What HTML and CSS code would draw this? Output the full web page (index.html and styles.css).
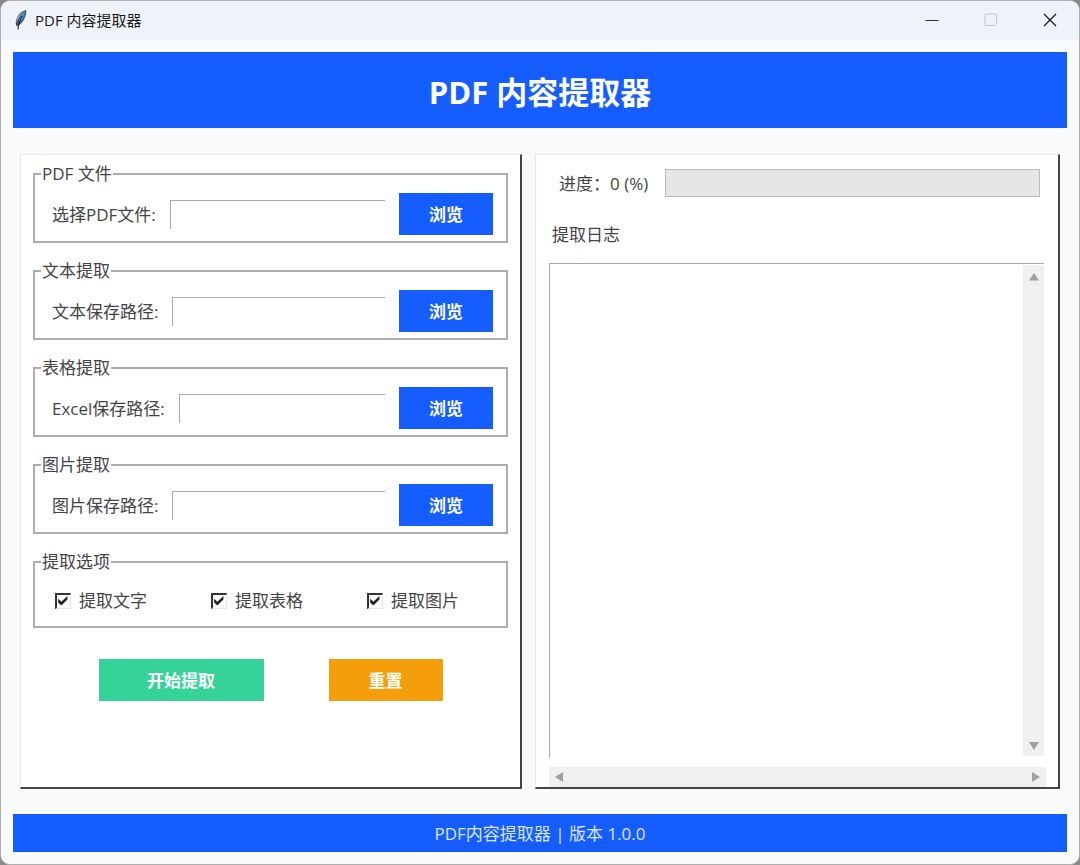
FILE: index.html
```
<!DOCTYPE html>
<html lang="zh-CN">
  <head>
    <meta charset="UTF-8" />
    <meta name="viewport" content="width=device-width, initial-scale=1.0" />
    <title>PDF 内容提取器</title>
    <link rel="stylesheet" href="styles.css">
  </head>
  <body>
    <div class="window">
      <header class="titlebar">
        <svg class="feather" width="14" height="22" viewBox="0 0 14 22">
          <path d="M12 1C8 2 4 5 2.500 10c-1 3-1 5 0 7l1 .5C7 15 10 12 11.500 7c.7-2 .9-4 .5-6z" fill="#3d5573" />
          <path d="M11 2C8 5 6 8 4.500 13.500L7.500 11.500c2-2.500 3.500-5.500 3.500-9.500z" fill="#4a90d9" />
          <path d="M10 2.500C6.500 4.500 4 7 2.800 10.500L2.500 14C4 9.500 6.500 5.500 10 2.500z" fill="#a9b7c6" />
          <path d="M8.500 7C6 10 4.500 15 4 20.500" fill="none" stroke="#1c1c1c" />
        </svg>
        <span class="titlebar-text">PDF 内容提取器</span>
        <div class="window-buttons">
          <button type="button" aria-label="最小化">
            <svg width="14" height="14" viewBox="0 0 14 14"><path d="M0.500 7.500h13" stroke="#333" /></svg>
          </button>
          <button type="button" aria-label="最大化" disabled>
            <svg width="14" height="14" viewBox="0 0 14 14"><rect x="1" y="1" width="11.500" height="11.500" rx="1" fill="none" stroke="#c4c8cc" /></svg>
          </button>
          <button type="button" aria-label="关闭">
            <svg width="14" height="14" viewBox="0 0 14 14"><path d="M1 1l12 12M13 1L1 13" stroke="#1a1a1a" stroke-width="1.300" /></svg>
          </button>
        </div>
      </header>

      <h1>PDF 内容提取器</h1>

      <main>
        <form class="panel form-panel" id="extractForm">
          <fieldset>
            <legend>PDF 文件</legend>
            <div class="row">
              <label for="pdf_file">选择PDF文件:</label>
              <input type="text" id="pdf_file" name="pdf_file" />
              <button type="button" class="btn">浏览</button>
            </div>
          </fieldset>

          <fieldset>
            <legend>文本提取</legend>
            <div class="row">
              <label for="text_path">文本保存路径:</label>
              <input type="text" id="text_path" name="text_path" />
              <button type="button" class="btn">浏览</button>
            </div>
          </fieldset>

          <fieldset>
            <legend>表格提取</legend>
            <div class="row">
              <label for="excel_path">Excel保存路径:</label>
              <input type="text" id="excel_path" name="excel_path" />
              <button type="button" class="btn">浏览</button>
            </div>
          </fieldset>

          <fieldset>
            <legend>图片提取</legend>
            <div class="row">
              <label for="image_path">图片保存路径:</label>
              <input type="text" id="image_path" name="image_path" />
              <button type="button" class="btn">浏览</button>
            </div>
          </fieldset>

          <fieldset>
            <legend>提取选项</legend>
            <div class="options">
              <label><input type="checkbox" name="opt_text" checked />提取文字</label>
              <label><input type="checkbox" name="opt_table" checked />提取表格</label>
              <label><input type="checkbox" name="opt_image" checked />提取图片</label>
            </div>
          </fieldset>

          <div class="actions">
            <button type="button" class="btn start">开始提取</button>
            <button type="reset" class="btn reset">重置</button>
          </div>
        </form>

        <section class="panel log-panel">
          <div class="progress-row">
            <label for="progress">进度：0 (%)</label>
            <progress id="progress" value="0" max="100"></progress>
          </div>
          <label class="log-label" for="log">提取日志</label>
          <div class="log-row">
            <textarea id="log" name="log" readonly></textarea>
            <div class="scroll-y">
              <svg width="10" height="8" viewBox="0 0 10 8"><path d="M5 0l5 7.500H0z" fill="#a0a0a0" /></svg>
              <svg width="10" height="8" viewBox="0 0 10 8"><path d="M0 0h10L5 8z" fill="#a0a0a0" /></svg>
            </div>
          </div>
          <div class="scroll-x">
            <svg width="8" height="10" viewBox="0 0 8 10"><path d="M8 0v10L0 5z" fill="#a0a0a0" /></svg>
            <svg width="8" height="10" viewBox="0 0 8 10"><path d="M0 0l8 5-8 5z" fill="#a0a0a0" /></svg>
          </div>
        </section>
      </main>

      <footer>PDF内容提取器 | 版本 1.0.0</footer>
    </div>
  </body>
</html>
```

FILE: styles.css
```
* {
  box-sizing: border-box;
}

body {
  margin: 0;
  background-color: #8a8a8a;
  color: #444;
  font-family: "Open Sans", "Noto Sans CJK SC", sans-serif;
  font-size: 17px;
  line-height: 24px;
}

button,
input,
textarea {
  font: inherit;
}

.window {
  display: flex;
  flex-direction: column;
  min-height: 100vh;
  border: 1px solid #b0b0b0;
  border-radius: 10px;
  background-color: #f8fafc;
  overflow: hidden;
}

.titlebar {
  display: flex;
  align-items: center;
  height: 39px;
  padding: 0 0 2px 13px;
  background-color: #eef3f9;
  color: #1a1a1a;
  font-size: 15px;
}

.titlebar-text {
  flex: 1;
  margin-left: 7px;
}

.window-buttons {
  display: flex;
}

.window-buttons button {
  display: flex;
  align-items: center;
  justify-content: center;
  width: 59px;
  height: 37px;
  padding: 0;
  border: none;
  background: none;
}

h1 {
  margin: 12px 12px 0;
  padding: 20px 0 16px;
  background-color: #165dff;
  color: #fff;
  font-size: 31px;
  line-height: 40px;
  text-align: center;
}

main {
  display: flex;
  flex: 1;
  gap: 13px;
  padding: 26px 19px 25px;
}

.panel {
  display: flex;
  flex-direction: column;
  min-width: 0;
  border: 1px solid #e5e7eb;
  border-right: 2px solid #444;
  border-bottom: 2px solid #444;
  background-color: #fff;
}

.form-panel {
  flex: 502 0 0;
  padding: 7px 12px;
}

fieldset {
  min-width: 0;
  margin: 0 0 16px;
  padding: 7px 6px 6px;
  border: 2px solid #adadad;
}

legend {
  padding: 0 1px;
}

.row {
  display: flex;
  align-items: center;
  padding: 0 7px 0 11px;
}

.row label {
  padding-top: 2px;
}

.row input {
  flex: 1;
  min-width: 0;
  height: 29px;
  margin: 0 14px;
  border: 0 solid #a8a8a8;
  border-width: 1px 0 0 1px;
  background-color: #fff;
}

.btn {
  width: 94px;
  height: 42px;
  padding: 2px 0 0;
  border: none;
  background-color: #165dff;
  color: #fff;
  font-weight: bold;
}

.options {
  display: grid;
  grid-template-columns: repeat(3, 156px);
  padding: 8px 0 7px 14px;
}

.options label {
  display: flex;
  align-items: center;
}

.options input {
  appearance: none;
  width: 16px;
  height: 16px;
  margin: 0 8px 0 0;
  border: 2px solid #333;
  border-right: 1px solid #e8e8e8;
  border-bottom: 1px solid #e8e8e8;
  background-color: #fff;
}

.options input:checked::after {
  content: "";
  display: block;
  width: 11px;
  height: 11px;
  background-color: #222;
  clip-path: polygon(10% 35%, 40% 62%, 95% 10%, 95% 42%, 40% 95%, 10% 68%);
}

.actions {
  display: flex;
  justify-content: center;
  gap: 65px;
  margin-top: 15px;
}

.start {
  width: 165px;
  background-color: #36d399;
}

.reset {
  width: 114px;
  background-color: #f59e0b;
}

.log-panel {
  flex: 525 0 0;
  padding: 14px 12px 0 13px;
}

.progress-row {
  display: flex;
  align-items: center;
  gap: 17px;
  padding: 0 6px 0 10px;
}

.progress-row label {
  padding-top: 2px;
}

progress {
  appearance: none;
  flex: 1;
  min-width: 0;
  height: 28px;
  border: 1px solid #bcbcbc;
  background-color: #e6e6e6;
}

progress::-webkit-progress-bar {
  background-color: #e6e6e6;
}

progress::-webkit-progress-value {
  background-color: #36d399;
}

.log-label {
  margin: 26px 3px 16px;
}

.log-row {
  display: flex;
  flex: 1;
  margin-right: 2px;
  border-top: 1px solid #a8a8a8;
}

textarea {
  flex: 1;
  min-width: 0;
  border: none;
  border-left: 1px solid #a8a8a8;
  background-color: #fff;
  resize: none;
  overflow: hidden;
}

.scroll-y,
.scroll-x {
  display: flex;
  align-items: center;
  justify-content: space-between;
  background-color: #f0f0f0;
}

.scroll-y {
  flex-direction: column;
  width: 21px;
  margin: 1px 0 2px;
  padding: 8px 0 6px;
}

.scroll-x {
  height: 20px;
  margin-top: 9px;
  padding: 0 6px;
}

footer {
  margin: 0 12px 12px;
  padding: 8px 0 6px;
  background-color: #165dff;
  color: #dbe6ff;
  text-align: center;
}
```
